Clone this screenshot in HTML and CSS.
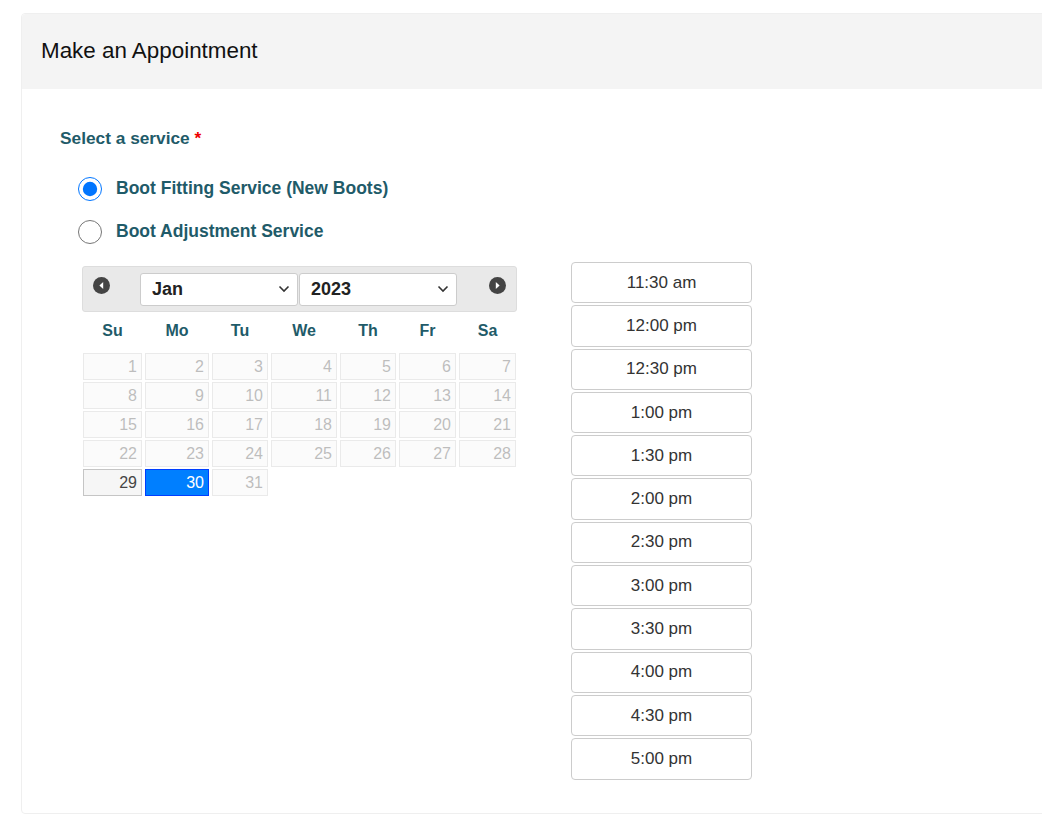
FILE: index.html
```html
<!DOCTYPE html>
<html>
<head>
<meta charset="utf-8">
<title>Make an Appointment</title>
<link rel="stylesheet" href="styles.css">
</head>
<body>

<div class="card">
	<div class="card-head">Make an Appointment</div>
	<div class="card-body">
		<div class="field-label">Select a service <span class="req">*</span></div>
		<div class="services">
			<label class="service"><input type="radio" name="svc" checked>Boot Fitting Service (New Boots)</label>
			<label class="service"><input type="radio" name="svc">Boot Adjustment Service</label>
		</div>

		<div class="booking">
			<div class="datepicker">
				<div class="dp-header">
					<a class="dp-nav">
						<svg width="17" height="17" viewBox="0 0 16 16"><circle cx="8" cy="8" r="8" fill="#444"/><path d="M9.6 4.6 L6 8 L9.6 11.4 Z" fill="#fff"/></svg>
					</a>
					<div class="dp-selects">
						<select class="dp-select"><option>Jan</option></select>
						<select class="dp-select"><option>2023</option></select>
					</div>
					<a class="dp-nav">
						<svg width="17" height="17" viewBox="0 0 16 16"><circle cx="8" cy="8" r="8" fill="#444"/><path d="M6.4 4.6 L10 8 L6.4 11.4 Z" fill="#fff"/></svg>
					</a>
				</div>
				<div class="dp-grid" id="grid">
					<div class="dp-dow">Su</div>
					<div class="dp-dow">Mo</div>
					<div class="dp-dow">Tu</div>
					<div class="dp-dow">We</div>
					<div class="dp-dow">Th</div>
					<div class="dp-dow">Fr</div>
					<div class="dp-dow">Sa</div>
				</div>
			</div>

			<div class="times" id="times"></div>
		</div>
	</div>
</div>

<script>
var grid = document.getElementById("grid"),
	times = document.getElementById("times"),
	slots = ["11:30 am", "12:00 pm", "12:30 pm", "1:00 pm", "1:30 pm", "2:00 pm",
		"2:30 pm", "3:00 pm", "3:30 pm", "4:00 pm", "4:30 pm", "5:00 pm"];

// days of January 2023 (starts on a Sunday)
for (var d = 1; d <= 31; d++) {
	var cell = document.createElement("div");
	cell.className = "dp-day";
	if (d == 29) cell.className += " today";
	else if (d == 30) cell.className += " active";
	else cell.className += " disabled";
	cell.textContent = d;
	grid.appendChild(cell);
}

// time slot buttons
slots.forEach(function(t) {
	var b = document.createElement("button");
	b.className = "slot";
	b.textContent = t;
	times.appendChild(b);
});
</script>

</body>
</html>
```

FILE: styles.css
```css
html {
	background: #fff;
}

body {
	margin: 0;
	padding: 13px 0 0 21px;
	overflow: hidden;
	font-family: "Liberation Sans", Arial, Helvetica, sans-serif;
}

.card {
	width: 1100px;
	border: 1px solid #efefef;
	border-radius: 4px;
	background: #fff;
	box-sizing: border-box;
}

.card-head {
	height: 75px;
	padding-left: 19px;
	background: #f4f4f4;
	font-size: 22.4px;
	color: #111;
	line-height: 73px;
	border-radius: 4px 4px 0 0;
}

.card-body {
	padding: 40px 0 33px 38px;
}

.field-label {
	font-size: 17.3px;
	font-weight: bold;
	color: #1f5b69;
	line-height: 18px;
}
.req {
	color: #e00;
}

.services {
	margin-top: 20px;
	padding-left: 18px;
}

.service {
	display: flex;
	align-items: center;
	height: 43px;
	font-size: 17.5px;
	font-weight: bold;
	color: #1f5b69;
}
.service input {
	width: 24px;
	height: 24px;
	margin: 0 14px 0 0;
	accent-color: #0075ff;
}

.booking {
	display: flex;
	align-items: flex-start;
	gap: 54px;
	margin-top: 9px;
	padding-left: 22px;
}

.datepicker {
	width: 435px;
	margin-top: 4px;
}

.dp-header {
	display: flex;
	align-items: center;
	height: 46px;
	padding: 0 10px;
	background: #e9e9e9;
	border: 1px solid #dddddd;
	border-radius: 3px;
	box-sizing: border-box;
}

.dp-nav {
	display: flex;
	margin-top: -7px;
}

.dp-selects {
	display: flex;
	gap: 1px;
	margin-left: 30px;
	margin-right: 32px;
}

.dp-select {
	appearance: none;
	-webkit-appearance: none;
	width: 158px;
	height: 33px;
	padding: 0 6px 0 11px;
	font-family: inherit;
	font-size: 18px;
	font-weight: bold;
	color: #222;
	background: #fff url("data:image/svg+xml,%3Csvg xmlns='http://www.w3.org/2000/svg' width='12' height='8' viewBox='0 0 12 8'%3E%3Cpath d='M1.5 1.5 L6 6 L10.5 1.5' fill='none' stroke='%23333' stroke-width='1.6'/%3E%3C/svg%3E") no-repeat right 7px center;
	border: 1px solid #ccc;
	border-radius: 3px;
}

.dp-grid {
	display: grid;
	grid-template-columns: 59px 64px 56px 66px 56px 57px 57px;
	grid-template-rows: 32px;
	grid-auto-rows: 27px;
	column-gap: 3px;
	row-gap: 2px;
	padding-left: 1px;
	margin-top: 7px;
}

.dp-dow {
	font-size: 16px;
	font-weight: bold;
	color: #1f5b69;
	text-align: center;
	line-height: 24px;
}

.dp-day {
	border: 1px solid #c5c5c5;
	background: #f6f6f6;
	color: #454545;
	font-size: 16px;
	line-height: 25px;
	text-align: right;
	padding-right: 4px;
}
.dp-day.disabled {
	opacity: .35;
}
.dp-day.active {
	border-color: #003eff;
	background: #007fff;
	color: #fff;
}

.times {
	display: flex;
	flex-direction: column;
	gap: 2px;
	width: 181px;
}

.slot {
	height: 41.3px;
	border: 1px solid #ccc;
	border-radius: 4px;
	background: #fff;
	font-family: inherit;
	font-size: 17px;
	color: #333;
	padding: 0;
}
```
